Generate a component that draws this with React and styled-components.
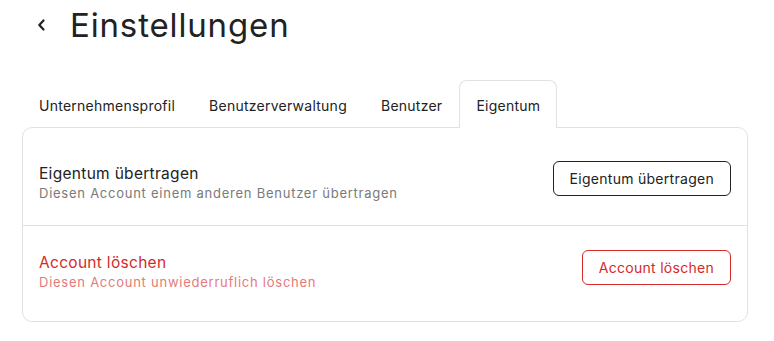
import React from "react";
import styled, { createGlobalStyle } from "styled-components";

const Global = createGlobalStyle`
  html, body { margin: 0; padding: 0; background: #ffffff; }
  body { font-family: Inter, "Noto Sans", "Liberation Sans", sans-serif; color: #222; }
  * { box-sizing: border-box; }
`;

const Page = styled.div`
  padding: 5px 26px 0 22px;
`;

const Header = styled.div`
  display: flex;
  align-items: center;
  height: 40px;
  padding-left: 14px;
  gap: 24px;
`;

const BackButton = styled.button`
  border: 0;
  background: none;
  padding: 0;
  width: 10px;
  height: 14px;
  display: flex;
  align-items: center;
  justify-content: center;
  cursor: pointer;
  color: #222;
`;

const Title = styled.h1`
  margin: 0;
  font-size: 33px;
  line-height: 40px;
  font-weight: 400;
  color: #222;
  letter-spacing: 0.85px;
`;

const TabBar = styled.div`
  display: flex;
  margin-top: 35px;
  margin-bottom: -1px;
  position: relative;
  z-index: 1;
`;

const Tab = styled.button`
  height: 48px;
  padding: 2px 16px 0;
  font-family: inherit;
  font-size: 14px;
  font-weight: 400;
  letter-spacing: 0.25px;
  color: #222;
  background: ${(p) => (p.$active ? "#fff" : "transparent")};
  border: 1px solid ${(p) => (p.$active ? "#e2e2e2" : "transparent")};
  border-bottom: 0;
  border-radius: 8px 8px 0 0;
  cursor: pointer;
`;

const Card = styled.div`
  border: 1px solid #e2e2e2;
  border-radius: 10px;
  background: #fff;
`;

const Row = styled.div`
  display: flex;
  align-items: flex-start;
  justify-content: space-between;
  padding: ${(p) => p.$top}px 16px ${(p) => p.$bottom}px 16px;
  & + & {
    border-top: 1px solid #e2e2e2;
  }
`;

const TextBlock = styled.div`
  margin-top: 3px;
  display: flex;
  flex-direction: column;
`;

const RowTitle = styled.div`
  font-size: 15.5px;
  line-height: 20px;
  letter-spacing: 0.3px;
  color: ${(p) => (p.$danger ? "#d42a2a" : "#222")};
`;

const RowSub = styled.div`
  font-size: 13px;
  line-height: 18px;
  letter-spacing: 0.75px;
  color: ${(p) => (p.$danger ? "#e57a7a" : "#7a7a7a")};
`;

const ActionButton = styled.button`
  height: 35px;
  padding: 0 16px;
  font-family: inherit;
  font-size: 14px;
  font-weight: 400;
  letter-spacing: 0.28px;
  background: #fff;
  color: ${(p) => (p.$danger ? "#d42a2a" : "#222")};
  border: 1px solid ${(p) => (p.$danger ? "#d42a2a" : "#222")};
  border-radius: 6px;
  cursor: pointer;
`;

const tabs = ["Unternehmensprofil", "Benutzerverwaltung", "Benutzer", "Eigentum"];

export default function App() {
  return (
    <>
      <Global />
      <Page>
        <Header>
          <BackButton aria-label="Zurück">
            <svg width="9" height="12" viewBox="0 0 9 12" fill="none">
              <path d="M6.5 1.5 L2.3 6 L6.5 10.5" stroke="#222" strokeWidth="2.2" strokeLinecap="round" strokeLinejoin="round" />
            </svg>
          </BackButton>
          <Title>Einstellungen</Title>
        </Header>
        <TabBar>
          {tabs.map((t) => (
            <Tab key={t} $active={t === "Eigentum"}>{t}</Tab>
          ))}
        </TabBar>
        <Card>
          <Row $top={33} $bottom={23}>
            <TextBlock>
              <RowTitle>Eigentum übertragen</RowTitle>
              <RowSub>Diesen Account einem anderen Benutzer übertragen</RowSub>
            </TextBlock>
            <ActionButton>Eigentum übertragen</ActionButton>
          </Row>
          <Row $top={24} $bottom={30}>
            <TextBlock>
              <RowTitle $danger>Account löschen</RowTitle>
              <RowSub $danger>Diesen Account unwiederruflich löschen</RowSub>
            </TextBlock>
            <ActionButton $danger>Account löschen</ActionButton>
          </Row>
        </Card>
      </Page>
    </>
  );
}
